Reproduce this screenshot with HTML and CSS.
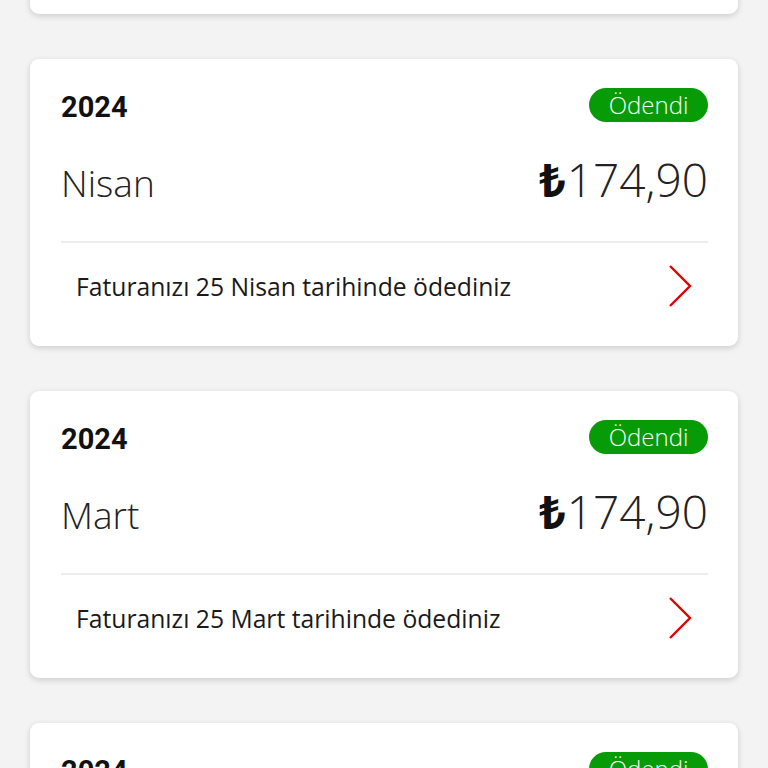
FILE: index.html
```html
<!DOCTYPE html>
<html lang="tr">
<head>
<meta charset="utf-8">
<link rel="stylesheet" href="styles.css">
</head>
<body>
<div class="list">
  <div class="card">
    <div class="top"><span class="year">2024</span><span class="badge">Ödendi</span></div>
    <div class="main"><span class="month">Mayıs</span><span class="amount"><span class="cur">₺</span>174,90</span></div>
    <div class="divider"></div>
    <div class="foot"><span class="note">Faturanızı 25 Mayıs tarihinde ödediniz</span>
      <svg class="chev" viewBox="0 0 24 44" width="24" height="44"><path d="M2 2 L22 22 L2 42" fill="none" stroke="#e60000" stroke-width="2.4"/></svg></div>
  </div>
  <div class="card">
    <div class="top"><span class="year">2024</span><span class="badge">Ödendi</span></div>
    <div class="main"><span class="month">Nisan</span><span class="amount"><span class="cur">₺</span>174,90</span></div>
    <div class="divider"></div>
    <div class="foot"><span class="note">Faturanızı 25 Nisan tarihinde ödediniz</span>
      <svg class="chev" viewBox="0 0 24 44" width="24" height="44"><path d="M2 2 L22 22 L2 42" fill="none" stroke="#e60000" stroke-width="2.4"/></svg></div>
  </div>
  <div class="card">
    <div class="top"><span class="year">2024</span><span class="badge">Ödendi</span></div>
    <div class="main"><span class="month">Mart</span><span class="amount"><span class="cur">₺</span>174,90</span></div>
    <div class="divider"></div>
    <div class="foot"><span class="note">Faturanızı 25 Mart tarihinde ödediniz</span>
      <svg class="chev" viewBox="0 0 24 44" width="24" height="44"><path d="M2 2 L22 22 L2 42" fill="none" stroke="#e60000" stroke-width="2.4"/></svg></div>
  </div>
  <div class="card">
    <div class="top"><span class="year">2024</span><span class="badge">Ödendi</span></div>
    <div class="main"><span class="month">Şubat</span><span class="amount"><span class="cur">₺</span>174,90</span></div>
    <div class="divider"></div>
    <div class="foot"><span class="note">Faturanızı 25 Şubat tarihinde ödediniz</span>
      <svg class="chev" viewBox="0 0 24 44" width="24" height="44"><path d="M2 2 L22 22 L2 42" fill="none" stroke="#e60000" stroke-width="2.4"/></svg></div>
  </div>
</div>
</body>
</html>
```
FILE: styles.css
```css
html, body {
  margin: 0;
  padding: 0;
  background: #f3f3f3;
  height: 768px;
  overflow: hidden;
  font-family: "Open Sans", "Noto Sans", sans-serif;
  color: #1a1a1a;
}
.list {
  display: flex;
  flex-direction: column;
  gap: 45px;
  padding: 0 30px;
  margin-top: -273px;
}
.card {
  background: #fff;
  border-radius: 9px;
  box-shadow: 0 2px 6px rgba(0,0,0,0.16);
  height: 287px;
  box-sizing: border-box;
  padding: 29px 30px 0 31px;
  display: flex;
  flex-direction: column;
}
.top {
  display: flex;
  justify-content: space-between;
  align-items: center;
  height: 34px;
}
.year {
  font-family: Roboto, "Liberation Sans", sans-serif;
  font-weight: 700;
  font-size: 29px;
  color: #111;
  margin-top: 4px;
}
.badge {
  background: #079b07;
  color: #fff;
  border-radius: 17px;
  height: 34px;
  width: 119px;
  display: flex;
  align-items: center;
  justify-content: center;
  font-size: 24px;
  font-weight: 300;
  box-sizing: border-box;
  padding-bottom: 2px;
}
.main {
  display: flex;
  justify-content: space-between;
  align-items: baseline;
  height: 84px;
  line-height: 84px;
  margin-top: 15px;
}
.month {
  font-size: 37px;
  font-weight: 300;
  color: #222;
}
.amount {
  font-size: 46px;
  font-weight: 300;
  color: #222;
}
.cur {
  font-weight: 700;
  color: #111;
  margin-right: 1px;
}
.divider {
  height: 2px;
  background: #ececec;
  margin-top: 20px;
}
.foot {
  display: flex;
  justify-content: space-between;
  align-items: center;
  height: 44px;
  margin-top: 21px;
  padding-left: 15px;
}
.note {
  font-size: 24.7px;
  color: #1a1a1a;
}
.chev {
  margin-right: 16px;
  display: block;
}
```
